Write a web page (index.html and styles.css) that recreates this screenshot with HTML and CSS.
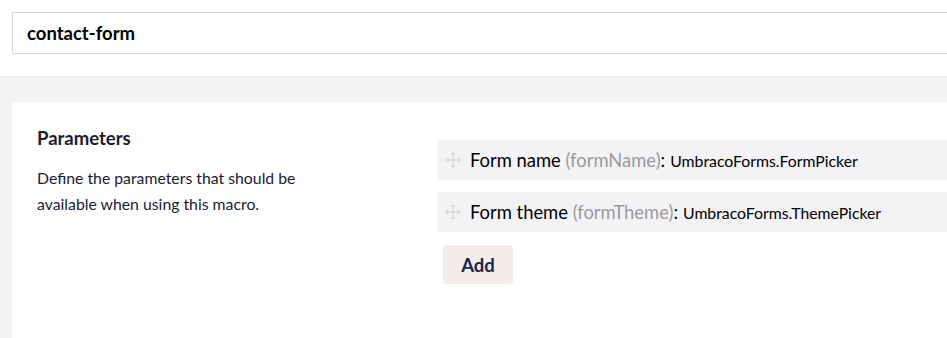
FILE: index.html
```html
<!DOCTYPE html>
<html lang="en">
<head>
  <meta charset="UTF-8" />
  <title>Macro - contact-form</title>
  <link rel="stylesheet" href="styles.css">
</head>
<body>
  <div class="editor">
    <div class="header">
      <input class="name-input" value="contact-form" />
    </div>

    <div class="content">
      <div class="box">
        <div class="box-side">
          <h3>Parameters</h3>
          <p>Define the parameters that should be available when using this macro.</p>
        </div>

        <div class="box-main">
          <div class="param">
            <svg class="move" viewBox="0 0 16 16" width="16" height="16">
              <path d="M8 1v14M1 8h14M6 3l2-2 2 2M6 13l2 2 2-2M3 6L1 8l2 2M13 6l2 2-2 2" fill="none" stroke="#d8d7d9" stroke-width="1.3"/>
            </svg>
            <span class="param-name">Form name <span class="alias">(formName)</span>:</span>
            <span class="param-type">UmbracoForms.FormPicker</span>
          </div>

          <div class="param">
            <svg class="move" viewBox="0 0 16 16" width="16" height="16">
              <path d="M8 1v14M1 8h14M6 3l2-2 2 2M6 13l2 2 2-2M3 6L1 8l2 2M13 6l2 2-2 2" fill="none" stroke="#d8d7d9" stroke-width="1.3"/>
            </svg>
            <span class="param-name">Form theme <span class="alias">(formTheme)</span>:</span>
            <span class="param-type">UmbracoForms.ThemePicker</span>
          </div>

          <button class="add-btn">Add</button>
        </div>
      </div>
    </div>
  </div>
</body>
</html>
```

FILE: styles.css
```css
html, body { overflow: hidden; }
body {
  margin: 0;
  font-family: Lato, 'Open Sans', sans-serif;
  color: #1b264f;
  background: #f4f2f2;
}
.editor { width: 1200px; }
.header {
  background: #fff;
  padding: 12px 12px 22px;
  border-bottom: 1px solid #e9e9eb;
}
.name-input {
  display: block;
  box-sizing: border-box;
  width: 100%;
  height: 42px;
  padding: 0 14px;
  border: 1px solid #d8d7d9;
  font-family: inherit;
  font-size: 18.5px;
  font-weight: bold;
  color: #000;
  outline: none;
}
.content { padding: 25px 12px; }
.box {
  display: grid;
  grid-template-columns: 400px 1fr;
  background: #fff;
  border-radius: 3px;
  padding: 22px 25px 50px;
  min-height: 200px;
}
.box-side h3 {
  margin: 3px 0 16px;
  font-size: 18.5px;
  color: #1b1b2f;
}
.box-side p {
  margin: 0;
  width: 290px;
  font-size: 15.8px;
  line-height: 26px;
  color: #1b1b2f;
}
.box-main { padding-top: 16px; }
.param {
  display: flex;
  align-items: center;
  height: 40px;
  margin-bottom: 12px;
  padding-left: 8px;
  background: #f3f3f5;
  font-size: 18.4px;
  color: #000;
}
.move { margin-right: 9px; }
.alias { color: #9a9a9a; }
.param-type { margin-left: 5px; font-size: 15.8px; }
.add-btn {
  margin: 1px 0 0 6px;
  width: 70px;
  height: 39px;
  border: none;
  border-radius: 3px;
  background: #f3ece9;
  font-family: inherit;
  font-size: 18.5px;
  font-weight: bold;
  color: #1b264f;
}
```
